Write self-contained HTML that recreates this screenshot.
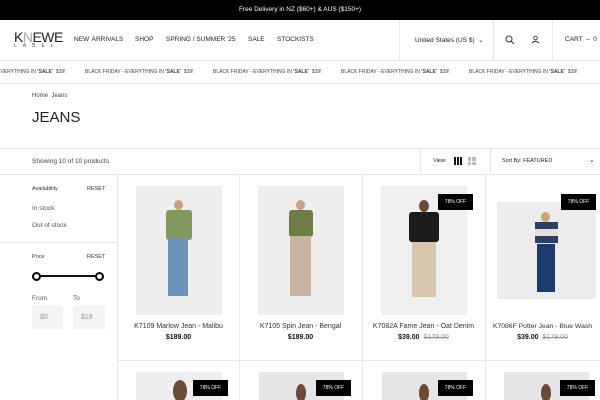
<!DOCTYPE html>
<html><head><meta charset="utf-8"><style>
*{margin:0;padding:0;box-sizing:border-box}
html,body{width:600px;height:400px;overflow:hidden}
body{background:#fff;font-family:"Liberation Sans",sans-serif;color:#222;position:relative}
.a{position:absolute}
.t{white-space:nowrap}
.vl{position:absolute;width:1px;background:#e8e8e8}
.hl{position:absolute;height:1px;background:#e8e8e8}
.img{position:absolute;background:#ececec;overflow:hidden}
.badge{position:absolute;background:#000;color:#fff;font-size:5px;width:35px;height:16px;line-height:16px;text-align:center}
.name{position:absolute;font-size:7px;color:#333;text-align:center;width:123px}
.price{position:absolute;font-size:7px;text-align:center;width:123px;color:#111}
.price s{color:#999;margin-left:4px}
.mq span{display:inline-block;width:128px}
</style></head><body>
<div class="a" style="left:0;top:0;width:600px;height:20px;background:#000"></div>
<div class="a t" style="left:0;top:6px;width:600px;text-align:center;color:#fff;font-size:6.5px">Free Delivery in NZ ($60+) &amp; AUS ($150+)</div>
<div class="a t" style="left:14px;top:29px;font-size:14px;letter-spacing:-0.5px;color:#222">K<span style="color:#aaa">N</span>EWE</div>
<div class="a t" style="left:14px;top:43px;font-size:5px;letter-spacing:6px;color:#555">LABEL</div>
<div class="a t" style="left:74px;top:36px;font-size:6.5px;color:#222;word-spacing:1px">NEW ARRIVALS</div>
<div class="a t" style="left:135px;top:36px;font-size:6.5px">SHOP</div>
<div class="a t" style="left:166px;top:36px;font-size:6.5px">SPRING / SUMMER '25</div>
<div class="a t" style="left:248px;top:36px;font-size:6.5px">SALE</div>
<div class="a t" style="left:277px;top:36px;font-size:6.5px">STOCKISTS</div>
<div class="vl" style="left:399px;top:20px;height:40px"></div>
<div class="vl" style="left:493px;top:20px;height:40px"></div>
<div class="vl" style="left:552px;top:20px;height:40px"></div>
<div class="a t" style="left:415px;top:36px;font-size:6.5px">United States (US $) &nbsp;⌄</div>
<svg class="a" style="left:505px;top:35px" width="10" height="10"><circle cx="4" cy="4" r="3" fill="none" stroke="#333" stroke-width="1"/><line x1="6.3" y1="6.3" x2="9" y2="9" stroke="#333"/></svg>
<svg class="a" style="left:531px;top:35px" width="9" height="9"><circle cx="4.5" cy="3" r="1.8" fill="none" stroke="#333" stroke-width=".9"/><path d="M1 8 Q4.5 4.5 8 8" fill="none" stroke="#333" stroke-width=".9"/></svg>
<div class="a t" style="left:565px;top:36px;font-size:6.5px">CART &nbsp;– &nbsp;0</div>
<div class="hl" style="left:0;top:60px;width:600px"></div>
<div class="a" style="left:0;top:61px;width:600px;height:22px;overflow:hidden">
<div class="a t mq" style="left:-43px;top:8px;font-size:5px;color:#444"><span>BLACK FRIDAY - EVERYTHING IN <b>'SALE'</b> &nbsp;$39!</span><span>BLACK FRIDAY - EVERYTHING IN <b>'SALE'</b> &nbsp;$39!</span><span>BLACK FRIDAY - EVERYTHING IN <b>'SALE'</b> &nbsp;$39!</span><span>BLACK FRIDAY - EVERYTHING IN <b>'SALE'</b> &nbsp;$39!</span><span>BLACK FRIDAY - EVERYTHING IN <b>'SALE'</b> &nbsp;$39!</span></div>
</div>
<div class="hl" style="left:0;top:83px;width:600px"></div>
<div class="a t" style="left:32px;top:93px;font-size:6px;color:#444">Home &nbsp;Jeans</div>
<div class="a t" style="left:32px;top:109px;font-size:15px;color:#222;font-weight:300">JEANS</div>
<div class="hl" style="left:0;top:148px;width:600px"></div>
<div class="a t" style="left:32px;top:158px;font-size:6.5px;color:#444">Showing 10 of 10 products</div>
<div class="vl" style="left:420px;top:148px;height:26px"></div>
<div class="vl" style="left:490px;top:148px;height:26px"></div>
<div class="a t" style="left:433px;top:158px;font-size:5.5px">View:</div>
<div class="a" style="left:454px;top:157px;width:8px;height:8px;background:repeating-linear-gradient(90deg,#111 0 2px,transparent 2px 3px)"></div>
<div class="a" style="left:468px;top:157px;width:8px;height:8px;background:#bbb"></div>
<div class="a" style="left:471px;top:157px;width:1px;height:8px;background:#fff"></div>
<div class="a" style="left:468px;top:160.5px;width:8px;height:1px;background:#fff"></div>
<div class="a t" style="left:502px;top:158px;font-size:5.5px">Sort By: FEATURED</div>
<div class="a t" style="left:589px;top:156px;font-size:7px">⌄</div>
<div class="hl" style="left:0;top:174px;width:600px"></div>
<div class="vl" style="left:117px;top:174px;height:226px"></div>
<div class="a t" style="left:32px;top:186px;font-size:5.5px;color:#333">Availability</div>
<div class="a t" style="left:87px;top:186px;font-size:5.5px;color:#333">RESET</div>
<div class="a t" style="left:32px;top:205px;font-size:6.5px;color:#555">In stock</div>
<div class="a t" style="left:32px;top:222px;font-size:6.5px;color:#555">Out of stock</div>
<div class="hl" style="left:0;top:242px;width:117px"></div>
<div class="a t" style="left:32px;top:254px;font-size:5.5px;color:#333">Price</div>
<div class="a t" style="left:87px;top:254px;font-size:5.5px;color:#333">RESET</div>
<div class="a" style="left:36px;top:275px;width:64px;height:2px;background:#111"></div>
<div class="a" style="left:32px;top:272px;width:9px;height:9px;border-radius:50%;border:2.5px solid #000;background:#fff"></div>
<div class="a" style="left:95px;top:272px;width:9px;height:9px;border-radius:50%;border:2.5px solid #000;background:#fff"></div>
<div class="a t" style="left:32px;top:295px;font-size:6.5px;color:#555">From</div>
<div class="a t" style="left:73px;top:295px;font-size:6.5px;color:#555">To</div>
<div class="a" style="left:32px;top:306px;width:31px;height:23px;background:#f4f4f4;font-size:7px;color:#999;padding:8px 0 0 8px">$0</div>
<div class="a t" style="left:66px;top:313px;font-size:6px;color:#bbb">-</div>
<div class="a" style="left:73px;top:306px;width:32px;height:23px;background:#f4f4f4;font-size:7px;color:#999;padding:8px 0 0 8px">$18</div>
<div class="vl" style="left:239px;top:174px;height:226px"></div>
<div class="vl" style="left:362px;top:174px;height:226px"></div>
<div class="vl" style="left:485px;top:174px;height:226px"></div>
<div class="hl" style="left:117px;top:360px;width:483px"></div>
<div class="img" style="left:136px;top:186px;width:86px;height:129px;background:#eeeeee">
 <div class="a" style="left:38px;top:14px;width:9px;height:10px;border-radius:50%;background:#c9a27f"></div>
 <div class="a" style="left:30px;top:24px;width:26px;height:30px;background:#7f9a5b;border-radius:3px"></div>
 <div class="a" style="left:32px;top:52px;width:20px;height:58px;background:#6e94bb"></div>
</div>
<div class="img" style="left:258px;top:186px;width:86px;height:129px;background:#eeeeee">
 <div class="a" style="left:38px;top:14px;width:9px;height:10px;border-radius:50%;background:#c9a27f"></div>
 <div class="a" style="left:31px;top:24px;width:24px;height:27px;background:#6f7b45;border-radius:3px"></div>
 <div class="a" style="left:32px;top:50px;width:21px;height:60px;background:#cbb3a4"></div>
</div>
<div class="img" style="left:381px;top:186px;width:86px;height:129px;background:#efefef">
 <div class="a" style="left:38px;top:14px;width:10px;height:12px;border-radius:50%;background:#6b4a36"></div>
 <div class="a" style="left:28px;top:26px;width:30px;height:30px;background:#1b1b1b;border-radius:3px"></div>
 <div class="a" style="left:31px;top:56px;width:24px;height:55px;background:#d8c7ad"></div>
</div>
<div class="badge" style="left:438px;top:194px">78% OFF</div>
<div class="img" style="left:497px;top:202px;width:99px;height:97px;background:#ececec">
 <div class="a" style="left:44px;top:10px;width:9px;height:10px;border-radius:50%;background:#c9a86f"></div>
 <div class="a" style="left:38px;top:20px;width:23px;height:22px;background:repeating-linear-gradient(180deg,#2b3e63 0 7px,#e6e0d3 7px 14px)"></div>
 <div class="a" style="left:40px;top:42px;width:18px;height:48px;background:#1f3b6e"></div>
</div>
<div class="badge" style="left:561px;top:194px">78% OFF</div>
<div class="name t" style="left:117px;top:323px">K7109 Marlow Jean - Malibu</div>
<div class="price t" style="left:117px;top:334px;font-weight:bold">$189.00</div>
<div class="name t" style="left:239px;top:323px">K7105 Spin Jean - Bengal</div>
<div class="price t" style="left:239px;top:334px;font-weight:bold">$189.00</div>
<div class="name t" style="left:362px;top:323px">K7082A Fame Jean - Oat Denim</div>
<div class="price t" style="left:362px;top:334px"><b>$39.00</b><s>$179.00</s></div>
<div class="name t" style="left:485px;top:323px;width:115px;font-size:6.8px">K7086F Potter Jean - Blue Wash</div>
<div class="price t" style="left:485px;top:334px;width:115px"><b>$39.00</b><s>$179.00</s></div>
<div class="img" style="left:136px;top:372px;width:86px;height:28px;background:#eeeeee"><div class="a" style="left:37px;top:8px;width:14px;height:22px;border-radius:50%;background:#6b4a36"></div></div>
<div class="badge" style="left:193px;top:380px">78% OFF</div>
<div class="img" style="left:259px;top:372px;width:85px;height:28px;background:#e6e6e8"><div class="a" style="left:37px;top:12px;width:10px;height:18px;border-radius:50%;background:#6b4a36"></div></div>
<div class="badge" style="left:316px;top:380px">78% OFF</div>
<div class="img" style="left:382px;top:372px;width:85px;height:28px;background:#e6e6e8"><div class="a" style="left:37px;top:12px;width:10px;height:18px;border-radius:50%;background:#6b4a36"></div></div>
<div class="badge" style="left:438px;top:380px">78% OFF</div>
<div class="img" style="left:504px;top:372px;width:85px;height:28px;background:#e6e6e8"><div class="a" style="left:37px;top:12px;width:10px;height:18px;border-radius:50%;background:#6b4a36"></div></div>
<div class="badge" style="left:560px;top:380px">78% OFF</div>
</body></html>
